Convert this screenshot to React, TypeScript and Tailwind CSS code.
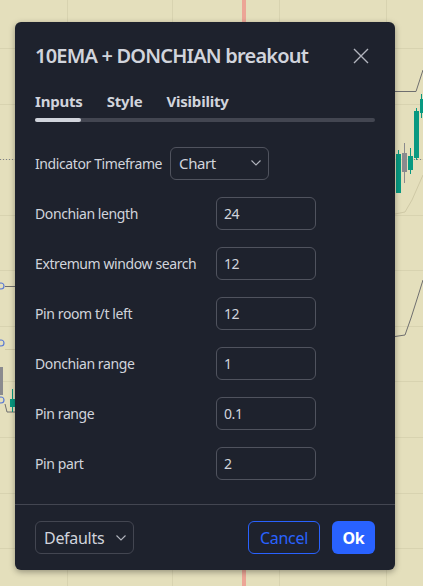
import React from 'react';

const font = { fontFamily: '"Noto Sans", "Open Sans", Arial, sans-serif' };

const rows: { label: string; value: string }[] = [
  { label: 'Donchian length', value: '24' },
  { label: 'Extremum window search', value: '12' },
  { label: 'Pin room t/t left', value: '12' },
  { label: 'Donchian range', value: '1' },
  { label: 'Pin range', value: '0.1' },
  { label: 'Pin part', value: '2' },
];

const Chevron = () => (
  <svg width="10" height="6" viewBox="0 0 10 6" fill="none">
    <path d="M0.5 0.5 L5 5 L9.5 0.5" stroke="#b2b5be" strokeWidth="1.1" />
  </svg>
);

const ChartBackdrop = () => {
  const gridY = [48, 104, 159, 215, 270, 326, 381, 437, 493, 548];
  const gridX = [67, 172, 279, 386];
  return (
    <svg className="absolute inset-0" width="423" height="586" viewBox="0 0 423 586">
      {gridX.map((x) => (
        <line key={'x' + x} x1={x + 0.5} y1="0" x2={x + 0.5} y2="586" stroke="#d8d3b0" strokeWidth="1" />
      ))}
      {gridY.map((y) => (
        <line key={'y' + y} x1="0" y1={y + 0.5} x2="423" y2={y + 0.5} stroke="#d8d3b0" strokeWidth="1" />
      ))}
      <rect x="242" y="0" width="4" height="586" fill="#eca596" />
      {/* price line */}
      <line x1="0" y1="159.5" x2="423" y2="159.5" stroke="#7d8088" strokeWidth="1" strokeDasharray="1 2" />
      {/* right side */}
      <polyline points="395,91.5 416,91.5 423,70" fill="none" stroke="#6f6f6f" strokeWidth="1" />
      <polyline points="395,214 405,212 412,200 423,175" fill="none" stroke="#cfc9a6" strokeWidth="1" />
      <polyline points="395,336.5 405,335 411,318 418,296 423,280" fill="none" stroke="#6f6f6f" strokeWidth="1" />
      <line x1="398.5" y1="150" x2="398.5" y2="193" stroke="#089981" />
      <rect x="396" y="154" width="5" height="39" fill="#089981" />
      <line x1="404.5" y1="143" x2="404.5" y2="183" stroke="#8a8a8e" />
      <rect x="402" y="153" width="5" height="19" fill="#8a8a8e" />
      <line x1="410.5" y1="148" x2="410.5" y2="174" stroke="#089981" />
      <rect x="408" y="156" width="5" height="14" fill="#089981" />
      <line x1="416.5" y1="108" x2="416.5" y2="160" stroke="#089981" />
      <rect x="414" y="111" width="5" height="47" fill="#089981" />
      <rect x="420" y="99" width="3" height="14" fill="#089981" />
      <line x1="421.5" y1="94" x2="421.5" y2="118" stroke="#089981" />
      {/* left side */}
      <line x1="5" y1="286.5" x2="15" y2="286.5" stroke="#6f6f6f" />
      <circle cx="1" cy="286" r="3" fill="none" stroke="#5b7bd5" strokeWidth="1.2" />
      <line x1="5" y1="349.5" x2="15" y2="349.5" stroke="#cfc9a6" />
      <circle cx="1" cy="343" r="3" fill="none" stroke="#5b7bd5" strokeWidth="1.2" />
      <rect x="0" y="367" width="3" height="28" fill="#8a8a8e" />
      <polyline points="5,404 7,412 15,412" fill="none" stroke="#6f6f6f" />
      <line x1="12.5" y1="389" x2="12.5" y2="412" stroke="#089981" />
      <rect x="10" y="399" width="5" height="8" fill="#089981" />
      <circle cx="1" cy="400" r="3" fill="none" stroke="#5b7bd5" strokeWidth="1.2" />
    </svg>
  );
};

export default function App() {
  return (
    <div className="relative w-[423px] h-[586px] overflow-hidden bg-[#e4dfbc]" style={font}>
      <ChartBackdrop />

      <div className="absolute left-[15px] top-[22px] w-[380px] h-[548px] flex flex-col rounded-[6px] bg-[#1e222d] shadow-[0_2px_6px_rgba(0,0,0,0.35)]">
        {/* header */}
        <div className="h-[67px] shrink-0 flex items-center justify-between pl-5 pr-[26px]">
          <h2 className="text-[20px] font-semibold tracking-[-0.8px] text-[#d1d4dc] leading-none">10EMA + DONCHIAN breakout</h2>
          <svg width="16" height="16" viewBox="0 0 16 16" fill="none" className="mt-[1px]">
            <path d="M1 1 L15 15 M15 1 L1 15" stroke="#b2b5be" strokeWidth="1.4" />
          </svg>
        </div>

        {/* tabs */}
        <div className="px-5 shrink-0">
          <div className="h-[24px] flex items-center gap-6 text-[15px] font-bold tracking-[-0.2px] text-[#d1d4dc]">
            <span>Inputs</span>
            <span>Style</span>
            <span>Visibility</span>
          </div>
          <div className="mt-[5px] h-[4px] rounded-full bg-[#434651] flex">
            <div className="w-[46px] h-full rounded-full bg-[#d1d4dc]" />
          </div>
        </div>

        {/* inputs */}
        <div className="px-5 pt-4 flex flex-col shrink-0 text-[14px] tracking-[-0.4px] text-[#d1d4dc]">
          <div className="h-[50px] flex items-center gap-2">
            <span>Indicator Timeframe</span>
            <div className="w-[99px] h-[33px] flex items-center justify-between rounded-[6px] border border-[#50535e] pl-[8px] pr-[7px] text-[15px]">
              <span>Chart</span>
              <Chevron />
            </div>
          </div>
          {rows.map((r) => (
            <div key={r.label} className="h-[50px] flex items-center">
              <span className="w-[181px] shrink-0">{r.label}</span>
              <div className="w-[100px] h-[33px] flex items-center rounded-[6px] border border-[#50535e] pl-[7px]">
                {r.value}
              </div>
            </div>
          ))}
        </div>

        <div className="flex-1" />

        {/* footer */}
        <div className="h-[66px] shrink-0 border-t border-[#434651] flex items-center justify-between px-5 text-[16px] tracking-[-0.3px]">
          <div className="w-[99px] h-[33px] flex items-center justify-between rounded-[6px] border border-[#434651] pl-[8px] pr-[7px] text-[#d1d4dc]">
            <span>Defaults</span>
            <Chevron />
          </div>
          <div className="flex items-center gap-3">
            <div className="w-[72px] h-[33px] flex items-center justify-center rounded-[6px] border border-[#2962ff] text-[#2962ff]">
              Cancel
            </div>
            <div className="w-[43px] h-[33px] flex items-center justify-center rounded-[6px] bg-[#2962ff] text-white font-bold">
              Ok
            </div>
          </div>
        </div>
      </div>
    </div>
  );
}
